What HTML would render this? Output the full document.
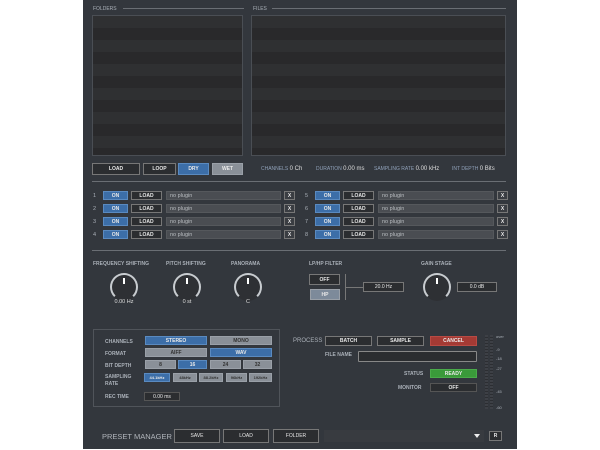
<!DOCTYPE html><html><head><style>
*{margin:0;padding:0;box-sizing:border-box}
body{width:600px;height:450px;background:#fff;position:relative;overflow:hidden;font-family:"Liberation Sans",sans-serif}
#p{position:absolute;left:83px;top:0;width:434px;height:449px;background:#33373d}
.a{position:absolute}
.l{position:absolute;font-size:5px;color:#aab0b8;white-space:nowrap}
.b{position:absolute;font-size:5px;font-weight:bold;color:#e8e8e8;text-align:center;border:1px solid #777;background:#2b2d30;display:flex;align-items:center;justify-content:center}
.bl{background:#3c6ea8;border-color:#5a8ac0}
.gr{background:#8a9098;border-color:#9aa0a8;color:#e8e8e8}
.list{position:absolute;border:1px solid #4a4e54;background:repeating-linear-gradient(#2f3032 0 12px,#29292b 12px 24px)}
.np{position:absolute;background:#4a4d52;border:1px solid #55585c;font-size:5.5px;color:#b8bcc0;padding-left:3px;display:flex;align-items:center}
.k{position:absolute;width:28px;height:28px;border-radius:50%;border:2px solid #c8ccd0;border-bottom-color:transparent;background:#2e3034}
.k::after{content:"";position:absolute;left:11px;top:3px;width:2px;height:6px;background:#fff}
.v{position:absolute;font-size:5.5px;color:#ddd;text-align:center}
.sep{position:absolute;height:1px;background:#6a6e74}
</style></head><body><div id="p">
<div class="l" style="left:10px;top:6px">FOLDERS</div><div class="sep" style="left:40px;top:8px;width:121px"></div>
<div class="l" style="left:170px;top:6px">FILES</div><div class="sep" style="left:189px;top:8px;width:234px"></div>
<div class="list" style="left:9px;top:15px;width:151px;height:141px"></div>
<div class="list" style="left:168px;top:15px;width:255px;height:141px"></div>
<div class="b" style="left:9px;top:163px;width:48px;height:12px">LOAD</div>
<div class="b" style="left:60px;top:163px;width:33px;height:12px">LOOP</div>
<div class="b bl" style="left:95px;top:163px;width:31px;height:12px">DRY</div>
<div class="b gr" style="left:129px;top:163px;width:31px;height:12px">WET</div>
<div class="l" style="left:178px;top:166px;color:#8fa0b8">CHANNELS <span style="color:#ddd;font-size:6px">0 Ch</span></div>
<div class="l" style="left:233px;top:166px;color:#8fa0b8">DURATION <span style="color:#ddd;font-size:6px">0.00 ms</span></div>
<div class="l" style="left:291px;top:166px;color:#8fa0b8">SAMPLING RATE <span style="color:#ddd;font-size:6px">0.00 kHz</span></div>
<div class="l" style="left:369px;top:166px;color:#8fa0b8">INT DEPTH <span style="color:#ddd;font-size:6px">0 Bits</span></div>
<div class="sep" style="left:9px;top:181px;width:414px"></div>
<div id="rows"></div>
<div class="sep" style="left:9px;top:250px;width:414px"></div>
<div class="l" style="left:10px;top:261px;font-weight:bold">FREQUENCY SHIFTING</div>
<div class="l" style="left:83px;top:261px;font-weight:bold">PITCH SHIFTING</div>
<div class="l" style="left:148px;top:261px;font-weight:bold">PANORAMA</div>
<div class="l" style="left:226px;top:261px;font-weight:bold">LP/HP FILTER</div>
<div class="l" style="left:338px;top:261px;font-weight:bold">GAIN STAGE</div>
<div class="k" style="left:27px;top:273px"></div><div class="v" style="left:21px;top:299px;width:40px">0.00 Hz</div>
<div class="k" style="left:90px;top:273px"></div><div class="v" style="left:84px;top:299px;width:40px">0 st</div>
<div class="k" style="left:151px;top:273px"></div><div class="v" style="left:145px;top:299px;width:40px">C</div>
<div class="k" style="left:340px;top:273px"></div>
<div class="b" style="left:226px;top:274px;width:31px;height:11px">OFF</div>
<div class="b gr" style="left:227px;top:289px;width:30px;height:11px;background:#7d8a9a">HP</div>
<div class="a" style="left:262px;top:274px;width:1px;height:26px;background:#777"></div>
<div class="a" style="left:262px;top:287px;width:18px;height:1px;background:#777"></div>
<div class="b" style="left:280px;top:282px;width:41px;height:10px;font-weight:normal">20.0 Hz</div>
<div class="b" style="left:374px;top:282px;width:40px;height:10px;font-weight:normal">0.0 dB</div>
<div class="a" style="left:10px;top:329px;width:187px;height:78px;border:1px solid #50545a"></div>
<div class="l" style="left:22px;top:339px;font-weight:bold">CHANNELS</div>
<div class="b bl" style="left:62px;top:336px;width:62px;height:9px">STEREO</div>
<div class="b gr" style="left:127px;top:336px;width:62px;height:9px;color:#333">MONO</div>
<div class="l" style="left:22px;top:351px;font-weight:bold">FORMAT</div>
<div class="b gr" style="left:62px;top:348px;width:62px;height:9px;color:#333">AIFF</div>
<div class="b bl" style="left:127px;top:348px;width:62px;height:9px">WAV</div>
<div class="l" style="left:22px;top:363px;font-weight:bold">BIT DEPTH</div>
<div class="b gr" style="left:62px;top:360px;width:31px;height:9px;color:#333">8</div>
<div class="b bl" style="left:95px;top:360px;width:29px;height:9px">16</div>
<div class="b gr" style="left:127px;top:360px;width:31px;height:9px;color:#333">24</div>
<div class="b gr" style="left:160px;top:360px;width:29px;height:9px;color:#333">32</div>
<div class="l" style="left:22px;top:374px;font-weight:bold;line-height:7px">SAMPLING<br>RATE</div>
<div class="b bl" style="left:61px;top:373px;width:26px;height:9px;font-size:4px">44.1kHz</div>
<div class="b gr" style="left:90px;top:373px;width:24px;height:9px;font-size:4px;color:#333">48kHz</div>
<div class="b gr" style="left:116px;top:373px;width:24px;height:9px;font-size:4px;color:#333">88.2kHz</div>
<div class="b gr" style="left:143px;top:373px;width:21px;height:9px;font-size:4px;color:#333">96kHz</div>
<div class="b gr" style="left:166px;top:373px;width:23px;height:9px;font-size:4px;color:#333">192kHz</div>
<div class="l" style="left:22px;top:394px;font-weight:bold">REC TIME</div>
<div class="b" style="left:61px;top:392px;width:36px;height:9px;font-weight:normal;border-color:#555">0.00 ms</div>
<div class="l" style="left:210px;top:338px;font-size:6px">PROCESS</div>
<div class="b" style="left:242px;top:336px;width:47px;height:10px">BATCH</div>
<div class="b" style="left:294px;top:336px;width:47px;height:10px">SAMPLE</div>
<div class="b" style="left:347px;top:336px;width:47px;height:10px;background:#a43a34;border-color:#b84a44">CANCEL</div>
<div class="l" style="left:242px;top:352px;font-weight:bold">FILE NAME</div>
<div class="a" style="left:275px;top:351px;width:119px;height:11px;border:1px solid #888;background:#2b2d30;border-radius:1px"></div>
<div class="l" style="left:321px;top:371px;font-weight:bold">STATUS</div>
<div class="b" style="left:347px;top:369px;width:47px;height:9px;background:#3a9a3a;border-color:#4aaa4a">READY</div>
<div class="l" style="left:315px;top:385px;font-weight:bold">MONITOR</div>
<div class="b" style="left:347px;top:383px;width:47px;height:9px;border-color:#555">OFF</div>
<div class="a" style="left:402px;top:335px;width:3px;height:74px;background:repeating-linear-gradient(#3d4046 0 2px,#2c2e32 2px 3px)"></div>
<div class="a" style="left:407px;top:335px;width:3px;height:74px;background:repeating-linear-gradient(#3d4046 0 2px,#2c2e32 2px 3px)"></div>
<div class="l" style="left:413px;top:334px;font-size:4px">over</div>
<div class="l" style="left:413px;top:347px;font-size:4px">-9</div>
<div class="l" style="left:413px;top:356px;font-size:4px">-18</div>
<div class="l" style="left:413px;top:366px;font-size:4px">-27</div>
<div class="l" style="left:413px;top:389px;font-size:4px">-45</div>
<div class="l" style="left:413px;top:405px;font-size:4px">-60</div>
<div class="l" style="left:19px;top:432px;font-size:7.5px;color:#b0b4ba">PRESET MANAGER</div>
<div class="b" style="left:91px;top:429px;width:46px;height:14px;font-weight:normal">SAVE</div>
<div class="b" style="left:140px;top:429px;width:46px;height:14px;font-weight:normal">LOAD</div>
<div class="b" style="left:190px;top:429px;width:46px;height:14px;font-weight:normal">FOLDER</div>
<div class="a" style="left:241px;top:430px;width:160px;height:12px;background:#383b40"></div>
<div class="a" style="left:391px;top:434px;width:0;height:0;border-left:3px solid transparent;border-right:3px solid transparent;border-top:4px solid #eee"></div>
<div class="b" style="left:406px;top:431px;width:13px;height:10px">R</div>
</div>
<script>
var h='';var ys=[191,204,217,230];
for(var s=0;s<2;s++)for(var i=0;i<4;i++){var o=s?212:0,y=ys[i]-0;
h+='<div class="l" style="left:'+(10+o)+'px;top:'+(y+2)+'px;font-size:5.5px">'+(s*4+i+1)+'</div>'+
'<div class="b bl" style="left:'+(20+o)+'px;top:'+y+'px;width:25px;height:9px">ON</div>'+
'<div class="b" style="left:'+(48+o)+'px;top:'+y+'px;width:31px;height:9px">LOAD</div>'+
'<div class="np" style="left:'+(83+o)+'px;top:'+y+'px;width:'+(s?116:115)+'px;height:9px">no plugin</div>'+
'<div class="b" style="left:'+(201+o+(s?1:0))+'px;top:'+y+'px;width:11px;height:9px;background:#3a3d42">X</div>';}
document.getElementById('rows').innerHTML=h;
</script>
</body></html>
